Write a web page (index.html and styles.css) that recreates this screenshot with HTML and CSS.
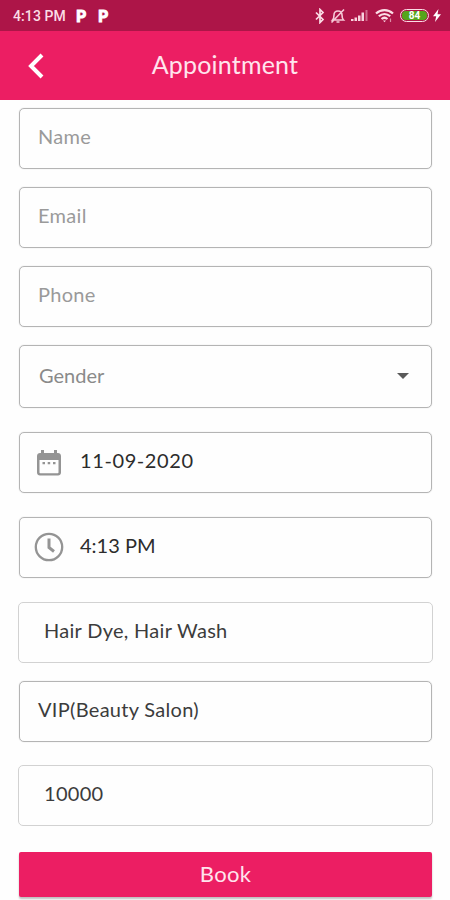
FILE: index.html
```html
<!DOCTYPE html>
<html lang="en">
<head>
  <meta charset="UTF-8" />
  <meta name="viewport" content="width=device-width, initial-scale=1.0"/>
  <title>Appointment</title>
  <link rel="stylesheet" href="styles.css">
</head>
<body>
  <div class="statusbar">
    <span class="clock">4:13 PM</span>
    <span class="app-p">P</span>
    <span class="app-p">P</span>
    <div class="status-icons">
      <svg class="bluetooth" width="10" height="16" viewBox="0 0 10 16" fill="none" stroke="#fbdde6" stroke-width="1.7"><path d="M1 4.500l7 7L5 14.500V1.500l3 3-7 7"/></svg>
      <svg class="bell" width="16" height="16" viewBox="0 0 16 16" fill="none" stroke="#f6cad8" stroke-width="1.600"><path d="M3 12h10.500c-1.500-1.500-1.500-2.500-1.500-5 0-2.500-1.500-4-4-4s-4 1.500-4 4c0 2.500 0 3.500-1.500 5zM6.500 14h3M1.500 14.500L14 1.500"/></svg>
      <svg class="signal" width="17" height="13" viewBox="0 0 17 13" fill="#f9d3df"><path d="M0 10h2.500v2H0zM3.500 8.500H6V12H3.500zM7 6.500h2.500V12H7zM10.500 3.500H13V12h-2.500z"/><path d="M14.500 1h2v11h-2z" opacity=".45"/></svg>
      <svg class="wifi" width="19" height="15" viewBox="0 0 19 15" fill="none" stroke="#fbdde6" stroke-width="2.200"><path d="M1 5.500c5-4.500 12-4.500 17 0M3.800 8.300c3.400-3 8-3 11.400 0M6.500 11c1.800-1.500 4.200-1.500 6 0"/><path d="M8 12.500h3L9.500 14.300z" fill="#fbdde6" stroke="none"/><path d="M15.500 10.500v3.500" stroke-width="1.200" opacity=".6"/></svg>
      <div class="battery"><span>84</span></div>
      <svg class="bolt" width="8" height="13" viewBox="0 0 8 13" fill="#fff"><path d="M5.500 0L0 7.300h3.200L2 13l6-7.700H4.500z"/></svg>
    </div>
  </div>

  <header>
    <svg class="back" width="16" height="26" viewBox="0 0 16 26" fill="none" stroke="#fff" stroke-width="4"><path d="M14 2L3 13l11 11"/></svg>
    <h1>Appointment</h1>
  </header>

  <form class="appointment">
    <div class="field name">Name</div>
    <div class="field email">Email</div>
    <div class="field phone">Phone</div>
    <div class="field gender"><span>Gender</span><i class="arrow"></i></div>
    <div class="field date">
      <svg width="24" height="26" viewBox="0 0 24 26"><path fill="#949494" fill-rule="evenodd" d="M3 3h1V0h3v3h10V0h3v3h1c1.700 0 3 1.300 3 3v16.500c0 1.700-1.300 3-3 3H3c-1.700 0-3-1.300-3-3V6c0-1.700 1.300-3 3-3zm-.5 7v12.500c0 .5.300.8.800.8h17.400c.500 0 .8-.3.800-.8V10z"/><path fill="#949494" d="M5.500 12H8v2.200H5.500zM10.700 12h2.500v2.200h-2.500zM16 12h2.500v2.200H16z"/></svg>
      <span>11-09-2020</span>
    </div>
    <div class="field time">
      <svg width="30" height="30" viewBox="0 0 30 30" fill="none" stroke="#949494"><circle cx="15" cy="15" r="13.200" stroke-width="2.300"/><path d="M15 6.500V15.500l5 4" stroke-width="3"/></svg>
      <span>4:13 PM</span>
    </div>
    <div class="field service">Hair Dye, Hair Wash</div>
    <div class="field salon">VIP(Beauty Salon)</div>
    <div class="field price">10000</div>
    <button type="button">Book</button>
  </form>
</body>
</html>
```

FILE: styles.css
```css
* {
  box-sizing: border-box;
}

body {
  font-family: Lato, "Open Sans", sans-serif;
  background-color: #fefefe;
  margin: 0;
  height: 900px;
  overflow: hidden;
}

.statusbar {
  display: flex;
  align-items: center;
  height: 31px;
  padding: 0 9px 0 13px;
  background-color: #ad1548;
  color: #fbdde6;
}

.clock {
  width: 63px;
  font-family: Roboto, sans-serif;
  font-size: 14px;
  font-weight: 500;
  letter-spacing: 0.1px;
  white-space: nowrap;
}

.app-p {
  width: 22px;
  font-family: Lato, sans-serif;
  font-size: 16px;
  font-weight: 900;
  color: #fff;
  -webkit-text-stroke: 1px #fff;
}

.status-icons {
  display: flex;
  align-items: center;
  margin-left: auto;
}

.bluetooth {
  margin-right: 1px;
}

.bell {
  margin-left: 4px;
}

.signal {
  margin-left: 5px;
}

.wifi {
  margin-left: 7px;
}

.battery {
  width: 29px;
  height: 13px;
  margin: 0 4px 0 6px;
  padding: 1px;
  border: 1.5px solid #fbdde6;
  border-radius: 7px;
}

.battery span {
  display: block;
  height: 9px;
  border-radius: 4px;
  background-color: #55a51c;
  color: #fff;
  font-family: Roboto, sans-serif;
  font-size: 10px;
  font-weight: 700;
  line-height: 9px;
  text-align: center;
}

header {
  display: flex;
  align-items: center;
  height: 69px;
  padding: 0 28px;
  background-color: #ec1e63;
  color: #ffe4ed;
}

h1 {
  flex: 1;
  margin: 0 16px 3px 0;
  font-size: 25px;
  font-weight: 400;
  letter-spacing: 0.2px;
  line-height: 30px;
  text-align: center;
}

.appointment {
  display: flex;
  flex-direction: column;
  padding: 8px 18px 0 19px;
}

.field {
  display: flex;
  align-items: center;
  height: 61px;
  margin-bottom: 18px;
  padding: 0 18px 5px;
  border: 1px solid #b4b4b4;
  border-radius: 5px;
  box-shadow: 0 0 1px rgba(0, 0, 0, 0.25);
  font-size: 20px;
  line-height: 24px;
  letter-spacing: 0.3px;
  color: #3c3c3c;
  white-space: nowrap;
}

.name,
.email,
.phone {
  color: #9a9a9a;
}

.gender {
  height: 63px;
  margin-bottom: 24px;
  padding-right: 22px;
  padding-bottom: 3px;
  padding-left: 19px;
  color: #8a8a8a;
  letter-spacing: 0;
}

.arrow {
  margin: 2px 0 0 auto;
  border-top: 6px solid #5a5a5a;
  border-right: 6px solid transparent;
  border-left: 6px solid transparent;
}

.date,
.time {
  margin-bottom: 24px;
  padding-left: 14px;
  color: #2c2c2c;
}

.date {
  letter-spacing: 0.6px;
}

.time {
  letter-spacing: 0;
}

.date svg {
  margin: 5px 19px 0 3px;
}

.time svg {
  margin: 4px 16px 0 0;
}

.service {
  padding-left: 25px;
}

.salon {
  margin-bottom: 23px;
}

.price {
  margin-bottom: 26px;
  padding-left: 25px;
}

.service,
.price {
  margin-right: -1px;
  margin-left: -1px;
  border-color: #d2d2d2;
  box-shadow: none;
}

button {
  height: 45px;
  padding: 0 0 2px;
  border: none;
  border-radius: 2px;
  background-color: #ec1e63;
  box-shadow: 0 2px 2px rgba(0, 0, 0, 0.25);
  color: #ffe4ed;
  font-family: inherit;
  font-size: 22px;
  letter-spacing: 0.3px;
}
```
